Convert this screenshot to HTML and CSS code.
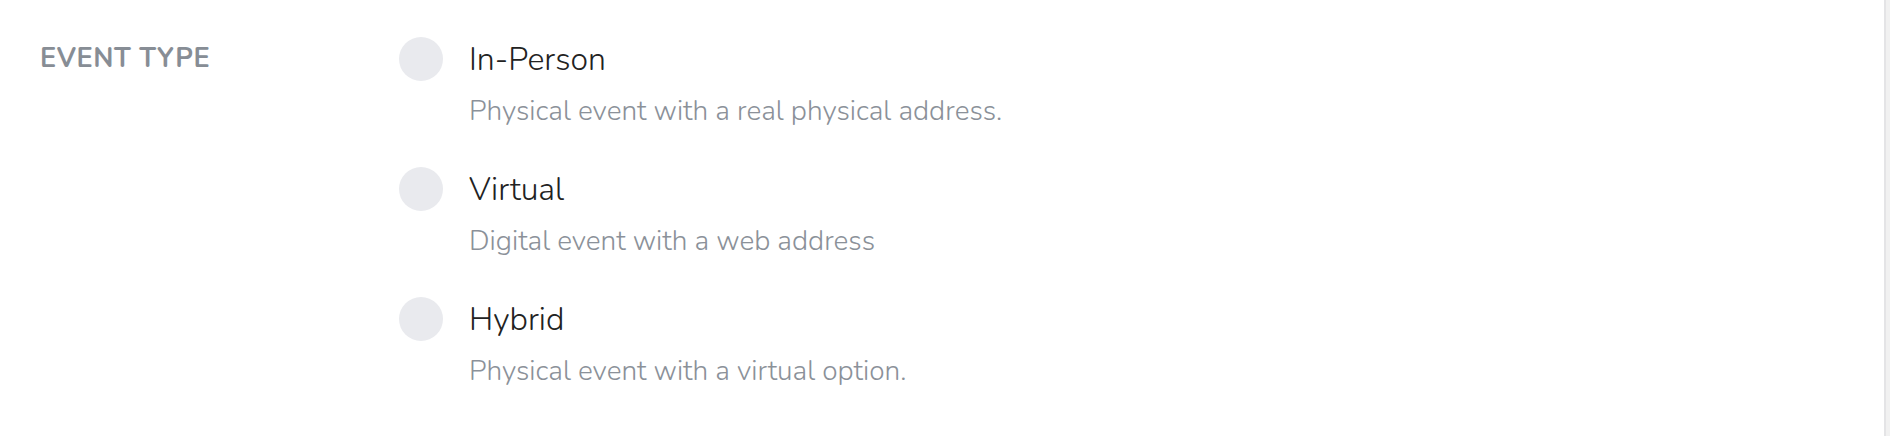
FILE: index.html
```html
<!DOCTYPE html>
<html lang="en">
<head>
    <meta charset="UTF-8">
    <meta name="viewport" content="width=device-width, initial-scale=1.0">
    <title>Event Type</title>
    <link rel="stylesheet" href="styles.css">
</head>
<body>
    <div class="page">
        <div class="content">
            <div class="field">
                <div class="field-label">Event Type</div>
                <div class="options">
                    <label class="option">
                        <input type="radio" name="event-type" value="in-person">
                        <span class="radio"></span>
                        <span class="option-text">
                            <span class="option-title">In-Person</span>
                            <span class="option-desc">Physical event with a real physical address.</span>
                        </span>
                    </label>
                    <label class="option">
                        <input type="radio" name="event-type" value="virtual">
                        <span class="radio"></span>
                        <span class="option-text">
                            <span class="option-title">Virtual</span>
                            <span class="option-desc">Digital event with a web address</span>
                        </span>
                    </label>
                    <label class="option">
                        <input type="radio" name="event-type" value="hybrid">
                        <span class="radio"></span>
                        <span class="option-text">
                            <span class="option-title">Hybrid</span>
                            <span class="option-desc">Physical event with a virtual option.</span>
                        </span>
                    </label>
                </div>
            </div>
        </div>
        <div class="scroll-track"></div>
    </div>
</body>
</html>
```

FILE: styles.css
```css
* {
    margin: 0;
    padding: 0;
    box-sizing: border-box;
    font-family: 'Nunito', 'Lato', 'Noto Sans', sans-serif;
}

body {
    background-color: #fff;
    color: #2b2b2b;
}

.page {
    display: flex;
    height: 436px;
}

.content {
    flex: 1;
    padding: 37px 0 0 40px;
}

.scroll-track {
    width: 6px;
    background-color: #f1f1f1;
    border-left: 2px solid #e4e4e6;
}

.field {
    display: grid;
    grid-template-columns: 359px 1fr;
}

.field-label {
    font-size: 27px;
    font-weight: 700;
    color: #878d95;
    text-transform: uppercase;
    letter-spacing: 0.6px;
    line-height: 44px;
}

.options {
    display: flex;
    flex-direction: column;
    gap: 28px;
}

.option {
    display: flex;
    gap: 26px;
    cursor: pointer;
}

.option input[type="radio"] {
    display: none;
}

.radio {
    flex: none;
    width: 44px;
    height: 44px;
    border-radius: 50%;
    background-color: #e9eaee;
}

.option-text {
    display: flex;
    flex-direction: column;
}

.option-title {
    font-size: 32px;
    font-weight: 300;
    line-height: 46px;
    color: #222;
}

.option-desc {
    font-size: 28px;
    font-weight: 300;
    line-height: 56px;
    color: #8b9199;
}
```
